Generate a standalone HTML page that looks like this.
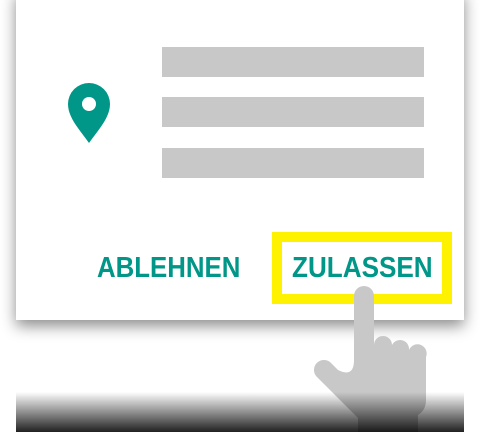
<!DOCTYPE html>
<html><head><meta charset="utf-8"><style>
html,body{margin:0;padding:0;width:480px;height:432px;overflow:hidden;background:#fff;position:relative;font-family:"Liberation Sans",sans-serif}
.card{position:absolute;left:16px;top:-10px;width:448px;height:330px;background:#fff;box-shadow:0 6px 14px rgba(0,0,0,.45)}
.bar{position:absolute;left:162px;width:262px;height:30px;background:#c8c8c8}
.t{position:absolute;top:251px;font-size:29px;font-weight:bold;color:#009688;transform-origin:left top;white-space:nowrap;line-height:34px}
.box{position:absolute;left:272px;top:232px;width:160px;height:52px;border:10px solid #fff200}
.grad{position:absolute;left:16px;top:392px;width:448px;height:40px;background:linear-gradient(to bottom,rgba(0,0,0,0),rgba(0,0,0,.87))}
</style></head><body>
<div class="card"></div>
<div class="bar" style="top:47px"></div>
<div class="bar" style="top:97px"></div>
<div class="bar" style="top:148px"></div>
<svg style="position:absolute;left:0;top:0" width="480" height="432">
<path d="M89 143 C80 130 68 118 68 104 A21 21 0 0 1 110 104 C110 118 98 130 89 143 Z" fill="#009688"/>
<circle cx="89" cy="104" r="7" fill="#fff"/>
</svg>
<div class="t" style="left:97px;transform:scaleX(.89)">ABLEHNEN</div>
<div class="t" style="left:292px;transform:scaleX(.90)">ZULASSEN</div>
<div class="box"></div>
<svg style="position:absolute;left:0;top:0" width="480" height="432">
<path d="M354 296 A10 10 0 0 1 374 296 L374 345 A9 9 0 0 1 392 345 A9 9 0 0 1 409 350 A9 9 0 0 1 426 357 L426 400 Q426 410 418 415 L418 432 L358 432 L358 418 L316 376 A10 10 0 0 1 330 362 L338 370 Q354 378 354 360 Z" fill="#c8c8c8"/>
</svg>
<div class="grad"></div>
</body></html>
